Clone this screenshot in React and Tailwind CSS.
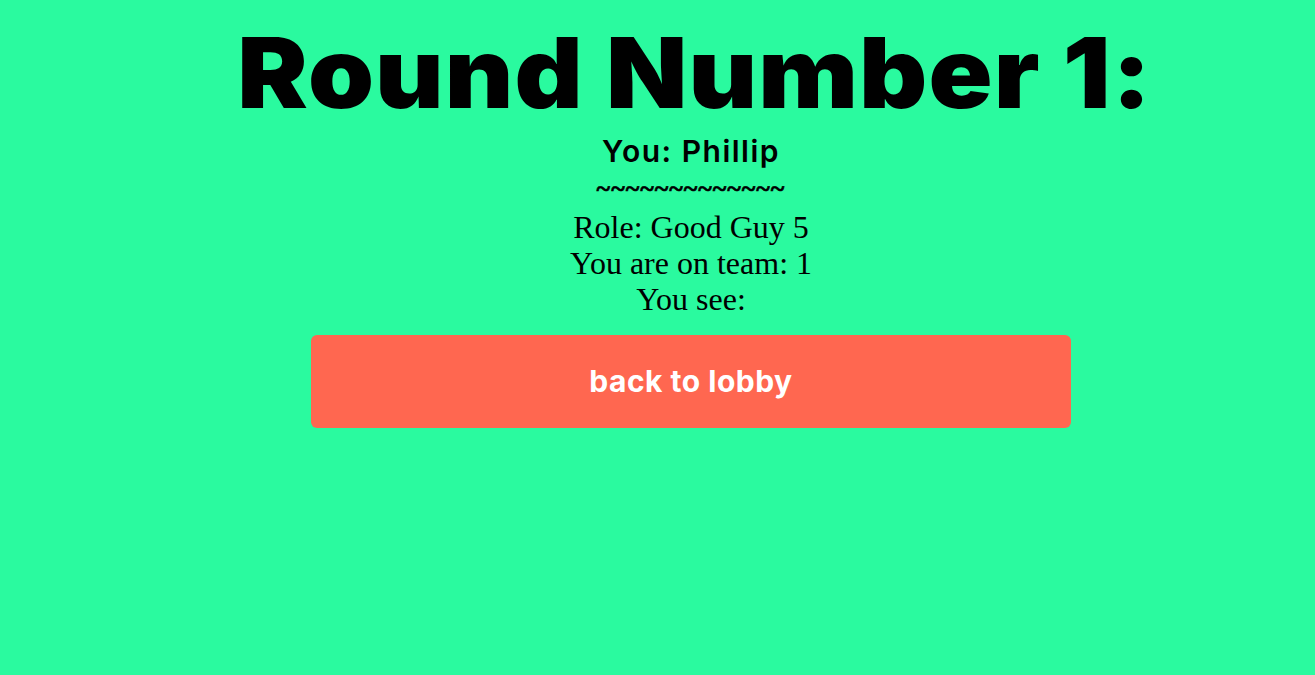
export default function App() {
  return (
    <div className="min-h-[675px] w-full bg-[#2afa9f] pl-[67px]">
      <div className="flex flex-col items-center text-black">
        <h1 className="mt-[24px] ml-[8px] text-[97px] leading-none font-black tracking-[1px] scale-x-[1.09] font-['Inter',sans-serif] whitespace-nowrap">
          Round Number 1:
        </h1>
        <div className="mt-[12px] text-[30px] leading-[36px] font-semibold tracking-[1.5px] font-['Inter',sans-serif]">
          You: Phillip
        </div>
        <div className="text-[26px] leading-[40px] font-extrabold tracking-[1px] font-['Liberation_Serif',serif] [-webkit-text-stroke:0.6px_black]">
          ~~~~~~~~~~~~~
        </div>
        <div className="flex flex-col items-center text-[32px] leading-[36px] font-['Liberation_Serif',serif]">
          <div>Role: Good Guy 5</div>
          <div>You are on team: 1</div>
          <div>You see:</div>
        </div>
        <button className="mt-[18px] flex h-[93px] w-[760px] items-center justify-center rounded-[6px] bg-[#ff6750] text-[30px] font-bold tracking-[0.5px] text-white font-['Inter',sans-serif]">
          back to lobby
        </button>
      </div>
    </div>
  );
}
